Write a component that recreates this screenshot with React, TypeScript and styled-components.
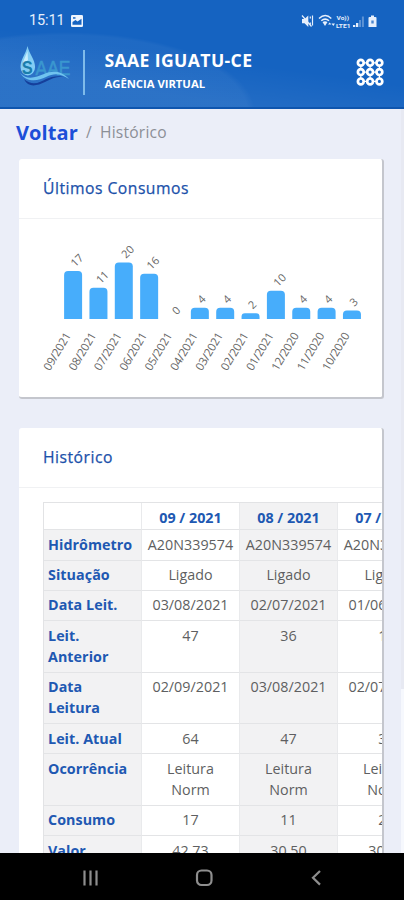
import React from "react";
import styled, { createGlobalStyle } from "styled-components";

const GlobalStyle = createGlobalStyle`
  * { box-sizing: border-box; }
  body { margin: 0; font-family: "Open Sans", "Noto Sans", sans-serif; background: #ebeef8; }
`;

const Screen = styled.div`
  width: 404px;
  height: 900px;
  display: flex;
  flex-direction: column;
  overflow: hidden;
  background: #ebeef8;
`;

const Header = styled.header`
  flex: none;
  height: 109px;
  border-bottom: 2px solid #0e55ae;
  background:
    linear-gradient(8deg, rgba(255, 255, 255, 0.06) 0 22%, transparent 48%),
    radial-gradient(ellipse 190px 80px at 65px 112px, rgba(255, 255, 255, 0.045) 0 96%, transparent 100%),
    #1563c1;
`;

const StatusBar = styled.div`
  display: flex;
  align-items: center;
  height: 42px;
  padding: 0 26px 0 29px;
  color: #e6effc;
`;

const Clock = styled.span`
  width: 42px;
  font: 14.5px/20px Roboto, sans-serif;
  letter-spacing: -0.1px;
  white-space: nowrap;
`;

const StatusIcons = styled.div`
  display: flex;
  margin-left: auto;
`;

const Brand = styled.div`
  display: flex;
  height: 65px;
  padding-left: 18px;
`;

const Divider = styled.div`
  width: 1.5px;
  height: 45px;
  margin: 8px 0 0 10px;
  background: #7fbbea;
`;

const Titles = styled.div`
  margin: 6px 0 0 20px;
  color: #fff;
  font-weight: 700;
  white-space: nowrap;
`;

const Title = styled.div`
  font-size: 17.6px;
  line-height: 24px;
  letter-spacing: 0.38px;
`;

const Subtitle = styled.div`
  margin-top: 2px;
  font-size: 11.3px;
  line-height: 20px;
  letter-spacing: -0.03px;
`;

const MenuButton = styled.button`
  margin: 15px 20px 0 auto;
  width: 28px;
  height: 30px;
  padding: 0;
  border: 0;
  background: none;
`;

const Main = styled.main`
  position: relative;
  flex: 1;
  min-height: 0;
  overflow: hidden;
  padding: 0 20px 0 19px;
`;

const Scrollbar = styled.div`
  position: absolute;
  top: 0;
  right: 0;
  width: 3px;
  height: 100%;
  background: #f6f8fd;

  &::before {
    content: "";
    display: block;
    height: 580px;
    background: #e7e9f2;
  }
`;

const Breadcrumb = styled.nav`
  display: flex;
  align-items: center;
  height: 50px;
  margin-left: -3px;
  padding-bottom: 4px;
  color: #8b8f96;
  font-size: 15.6px;
  letter-spacing: 0.2px;
`;

const BackLink = styled.a`
  width: 70px;
  color: #1c4fd8;
  font-size: 20px;
  font-weight: 700;
  letter-spacing: 0.1px;
`;

const Slash = styled.span`
  width: 14px;
`;

const Card = styled.section<{ $h: number }>`
  width: 365px;
  height: ${(p) => p.$h}px;
  margin-bottom: 29px;
  overflow: hidden;
  border-radius: 3px;
  background: #fff;
  border-right: 2px solid #c4c6cd;
  border-bottom: 2px solid #c4c6cd;
`;

const CardTitle = styled.h2`
  height: 60px;
  margin: 0;
  padding-left: 24px;
  border-bottom: 1px solid #f0f1f3;
  color: #1b51aa;
  font-size: 15.7px;
  font-weight: 500;
  line-height: 59px;
  letter-spacing: 0.5px;
  -webkit-text-stroke: 0.25px #1b51aa;
`;

const Chart = styled.svg`
  display: block;
  font-family: "Open Sans", sans-serif;
  fill: #666;
`;

const TableScroll = styled.div`
  margin: 14px 0 0 24px;
  overflow: hidden;
`;

const Table = styled.table`
  width: 393px;
  table-layout: fixed;
  border-collapse: separate;
  border-spacing: 0;
  border-left: 1px solid #e2e3e5;
  border-top: 1px solid #e2e3e5;
  font-size: 14.3px;
`;

const Cell = styled.td<{ $shaded?: boolean }>`
  padding: 3.5px 4px 4.6px;
  border-right: 1px solid #e9eaec;
  border-bottom: 1px solid #e3e4e6;
  background: ${(p) => (p.$shaded ? "#f2f2f3" : "#fff")};
  color: #5e5f61;
  text-align: center;
  vertical-align: top;
  line-height: 21.2px;
  white-space: pre-line;
  letter-spacing: 0.02px;
`;

const RowLabel = styled(Cell).attrs({ as: "th" })`
  color: #2058b2;
  font-weight: 700;
  text-align: left;
  letter-spacing: 0.05px;
`;

const MonthCell = styled(Cell).attrs({ as: "th" })`
  height: 27px;
  padding: 4px 4px 1px;
  color: #2058b2;
  font-weight: 700;
  letter-spacing: 0;
`;

const NavBar = styled.footer`
  flex: none;
  display: flex;
  align-items: center;
  height: 47px;
  padding: 2px 79px 0 82px;
  justify-content: space-between;
  background: #000;
`;

const readings: [string, number][] = [
  ["09/2021", 17], ["08/2021", 11], ["07/2021", 20], ["06/2021", 16],
  ["05/2021", 0], ["04/2021", 4], ["03/2021", 4], ["02/2021", 2],
  ["01/2021", 10], ["12/2020", 4], ["11/2020", 4], ["10/2020", 3],
];

const months = ["09 / 2021", "08 / 2021", "07 / 2021"];

const rows: [string, string[]][] = [
  ["Hidrômetro", ["A20N339574", "A20N339574", "A20N339574"]],
  ["Situação", ["Ligado", "Ligado", "Ligado"]],
  ["Data Leit.", ["03/08/2021", "02/07/2021", "01/06/2021"]],
  ["Leit.\nAnterior", ["47", "36", "16"]],
  ["Data\nLeitura", ["02/09/2021", "03/08/2021", "02/07/2021"]],
  ["Leit. Atual", ["64", "47", "36"]],
  ["Ocorrência", ["Leitura\nNorm", "Leitura\nNorm", "Leitura\nNorm"]],
  ["Consumo", ["17", "11", "20"]],
  ["Valor", ["42,73", "30,50", "30,50"]],
];

function barPath(x: number, value: number) {
  const h = value * 2.83;
  const r = Math.min(4, h * 0.6);
  const top = 100 - h;
  return `M${x} 100V${top + r}q0 ${-r} ${r} ${-r}h${18 - 2 * r}q${r} 0 ${r} ${r}V100z`;
}

function ConsumptionChart() {
  return (
    <Chart width="363" height="178" viewBox="0 0 363 178">
      {readings.map(([month, value], i) => {
        const x = 45.1 + i * 25.35;
        const top = 100 - value * 2.83;
        return (
          <g key={month}>
            {value > 0 && <path d={barPath(x, value)} fill="#47adfb" />}
            <text transform={`translate(${x + 11.2} ${top - 3.5}) rotate(-45)`} fontSize="11">{value}</text>
            <text transform={`translate(${x + 7.2} 116.5) rotate(-59)`} fontSize="11.4" textAnchor="end" textLength="42">{month}</text>
          </g>
        );
      })}
    </Chart>
  );
}

function Logo() {
  return (
    <svg width="55" height="46" viewBox="0 0 55 46">
      <path d="M9.5 4C8 12 2.5 17 2.5 25a7.3 8.5 0 0 0 14.6 0C17 17 11 12 9.5 4z" fill="#83cdf4" />
      <path d="M9.5 9C8 14 5 18 5 22l5-4z" fill="#c7edfc" />
      <text x="3.8" y="31.5" fontFamily="Liberation Sans, sans-serif" fontWeight="700" fontSize="18" textLength="11" lengthAdjust="spacingAndGlyphs" fill="#1b7eac">S</text>
      <text x="17.5" y="33" fontFamily="Liberation Sans, sans-serif" fontSize="20" textLength="35" lengthAdjust="spacingAndGlyphs" fill="#3a97cf" stroke="#3a97cf" strokeWidth="0.5">AAE</text>
      <path d="M6 37c9 8 16 3 22 0s15-4 22-1c-9-3-15 0-23 4S10 46 6 37z" fill="#153f9b" />
      <path d="M2 31c8 8 16 4 24 1s16-4 25 5c-9-6-15-6-23-2S9 41 2 31z" fill="#70c3ef" />
    </svg>
  );
}

function PictureIcon() {
  return (
    <svg width="12" height="12" viewBox="0 0 12 12">
      <rect width="12" height="12" rx="1.3" fill="#eef4fd" />
      <path d="M1.5 9.8V7l3-2 2 1.5 4-2.7v6z" fill="#1563c1" />
      <path d="M2 2.2h2.5v1.5H2z" fill="#1563c1" />
    </svg>
  );
}

function SignalIcons() {
  return (
    <svg width="78" height="16" viewBox="300 12.5 78 16" fill="#e6effc">
      <path d="M302 18.5h2.5l3.8-3.5v11.5l-3.8-3.8H302z" />
      <path d="M302 15l9.5 11M310.3 16v2m2.2-3v10m-2.2-3v3" stroke="#e6effc" strokeWidth="1.2" fill="none" />
      <path d="M319 18c4-3.7 8.5-3.7 12.3 0M321.3 20.3c2.5-2.2 5.2-2.2 7.7 0" stroke="#e6effc" strokeWidth="1.5" fill="none" />
      <path d="M322.5 21.4q2.5-1.500 5 0l-2.500 4z" />
      <path d="M328 24l1.7-2 1.7 2zm3.500-1h3.500l-1.700 2.500z" />
      <text x="336.500" y="19.8" fontSize="6.2" fontFamily="Roboto, sans-serif" fontWeight="700" textLength="12.5" lengthAdjust="spacingAndGlyphs">Vo))</text>
      <text x="336" y="27" fontSize="6.2" fontFamily="Roboto, sans-serif" fontWeight="700" textLength="14.5" lengthAdjust="spacingAndGlyphs">LTE1</text>
      <path d="M353 26.500v-2h2.300v2zm3 0v-4h2.300v4z" />
      <path d="M359 26.500v-7h2v7zm2.900 0V16h2v10.500z" opacity=".35" />
      <path d="M371 15h3v1.500h1.500q1 0 1 1V26.500h-8v-9q0-1 1-1H371z" />
      <path d="M371.300 20h2.400v3h-2.400z" fill="#4c87ce" />
    </svg>
  );
}

function GridIcon() {
  return (
    <svg width="28" height="30" viewBox="0 0 28 30" fill="none" stroke="#fff" strokeWidth="2.7">
      {[0, 1, 2].map((r) => [0, 1, 2].map((c) => <circle key={`${r}${c}`} cx={4.8 + c * 9.3} cy={5.8 + r * 9.3} r="2.9" />))}
      {[0, 1, 2].map((r) => <path key={r} d={`M8 ${5.8 + r * 9.3}h3m6.300 0h3M${4.8 + r * 9.3} 9v3m0 6.300v3`} strokeWidth="1.2" />)}
    </svg>
  );
}

export default function App() {
  return (
    <Screen>
      <GlobalStyle />
      <Header>
        <StatusBar>
          <Clock>15:11</Clock>
          <PictureIcon />
          <StatusIcons><SignalIcons /></StatusIcons>
        </StatusBar>
        <Brand>
          <Logo />
          <Divider />
          <Titles>
            <Title>SAAE IGUATU-CE</Title>
            <Subtitle>AGÊNCIA VIRTUAL</Subtitle>
          </Titles>
          <MenuButton aria-label="Menu"><GridIcon /></MenuButton>
        </Brand>
      </Header>
      <Main>
        <Breadcrumb>
          <BackLink>Voltar</BackLink>
          <Slash>/</Slash>
          <span>Histórico</span>
        </Breadcrumb>
        <Card $h={240}>
          <CardTitle>Últimos Consumos</CardTitle>
          <ConsumptionChart />
        </Card>
        <Card $h={500}>
          <CardTitle>Histórico</CardTitle>
          <TableScroll>
            <Table>
              <thead>
                <tr>
                  <MonthCell />
                  {months.map((m, i) => <MonthCell key={m} $shaded={i === 1}>{m}</MonthCell>)}
                </tr>
              </thead>
              <tbody>
                {rows.map(([label, values]) => (
                  <tr key={label}>
                    <RowLabel $shaded>{label}</RowLabel>
                    {values.map((v, i) => <Cell key={i} $shaded={i === 1}>{v}</Cell>)}
                  </tr>
                ))}
              </tbody>
            </Table>
          </TableScroll>
        </Card>
        <Scrollbar />
      </Main>
      <NavBar>
        <svg width="18" height="18" viewBox="0 0 18 18" stroke="#8e8e8e" strokeWidth="2.2"><path d="M2.500 1.500v15M8.500 1.500v15M14.500 1.500v15" /></svg>
        <svg width="18" height="18" viewBox="0 0 18 18" fill="none" stroke="#8e8e8e" strokeWidth="2.2"><rect x="2" y="1.5" width="14.5" height="14.5" rx="4.5" /></svg>
        <svg width="18" height="18" viewBox="0 0 18 18" fill="none" stroke="#8e8e8e" strokeWidth="2.2"><path d="M13 2L6 8.800l7 6.800" /></svg>
      </NavBar>
    </Screen>
  );
}
